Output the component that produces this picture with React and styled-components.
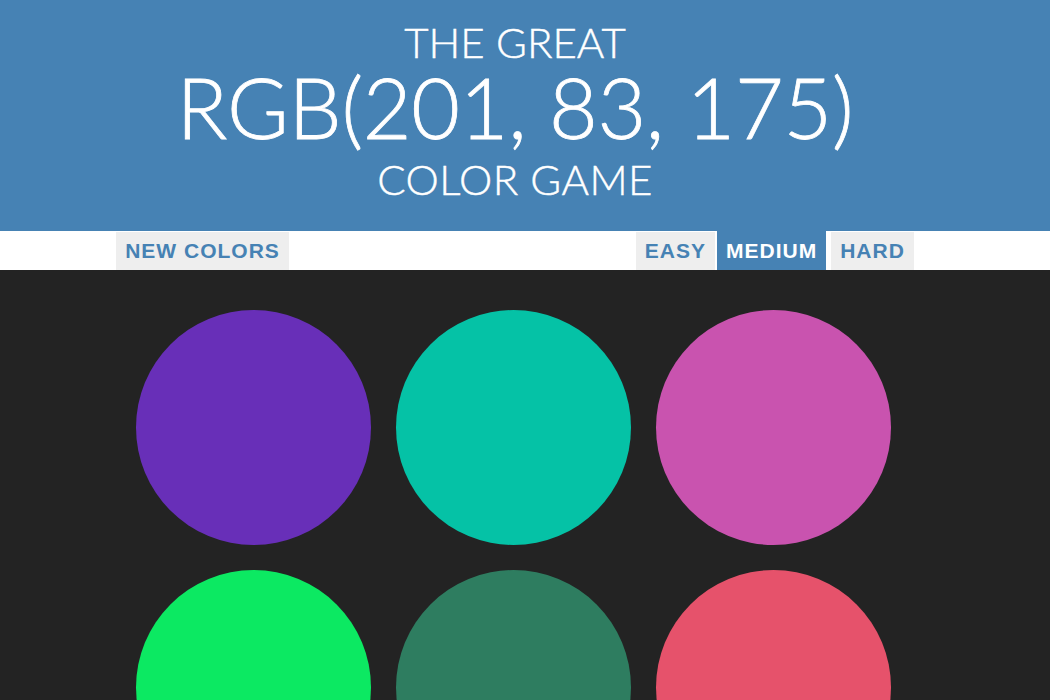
import React, { useState } from 'react'
import styled, { createGlobalStyle } from 'styled-components'

const GlobalStyle = createGlobalStyle`
  html, body {
    margin: 0;
    padding: 0;
    overflow: hidden;
    background-color: #232323;
  }
  body {
    font-family: Lato, "Noto Sans", sans-serif;
  }
`

const Header = styled.h1`
  margin: 0;
  padding: 21px 20px 31px 0;
  background-color: steelblue;
  color: white;
  text-align: center;
  font-weight: 300;
  text-transform: uppercase;
`

const Line = styled.span`
  display: block;
  font-size: ${p => (p.$big ? 84 : 42)}px;
  line-height: 1;
  letter-spacing: ${p => p.$spacing || 0}px;
  margin-top: ${p => p.$gap || 0}px;
  -webkit-text-stroke: ${p => (p.$big ? 0.8 : 0.45)}px white;
`

const Stripe = styled.div`
  display: flex;
  align-items: flex-end;
  justify-content: center;
  height: 39px;
  padding-right: 20px;
  background-color: white;
`

const Button = styled.button`
  height: ${p => (p.$selected ? 39 : 38)}px;
  margin: 0 0 0 ${p => p.$gap || 0}px;
  padding: 0 9px;
  border: none;
  outline: none;
  background-color: ${p => (p.$selected ? 'steelblue' : '#eeeeee')};
  color: ${p => (p.$selected ? 'white' : 'steelblue')};
  font-family: "Liberation Sans", Arial, sans-serif;
  font-size: 21px;
  font-weight: 700;
  letter-spacing: 1px;
  text-transform: uppercase;
  cursor: pointer;
`

const Message = styled.span`
  display: inline-block;
  width: 347px;
`

const Board = styled.div`
  display: grid;
  grid-template-columns: repeat(3, 235px);
  gap: 25px;
  justify-content: center;
  padding: 40px 23px 0 0;
`

const Square = styled.div`
  width: 235px;
  height: 235px;
  border-radius: 50%;
  background-color: ${p => p.$color};
`

const colors = [
  'rgb(104, 47, 184)',
  'rgb(5, 194, 166)',
  'rgb(201, 83, 175)',
  'rgb(12, 233, 98)',
  'rgb(46, 125, 96)',
  'rgb(230, 82, 107)',
]

export default function App() {
  const [mode, setMode] = useState('medium')

  return (
    <>
      <GlobalStyle />
      <Header>
        <Line>The Great</Line>
        <Line $big $gap={2} $spacing={-0.25}>RGB(201, 83, 175)</Line>
        <Line $gap={9} $spacing={0.4}>Color Game</Line>
      </Header>
      <Stripe>
        <Button>New Colors</Button>
        <Message />
        <Button $selected={mode === 'easy'} onClick={() => setMode('easy')}>Easy</Button>
        <Button $gap={2} $selected={mode === 'medium'} onClick={() => setMode('medium')}>Medium</Button>
        <Button $gap={5} $selected={mode === 'hard'} onClick={() => setMode('hard')}>Hard</Button>
      </Stripe>
      <Board>
        {colors.map(c => (
          <Square key={c} $color={c} />
        ))}
      </Board>
    </>
  )
}
